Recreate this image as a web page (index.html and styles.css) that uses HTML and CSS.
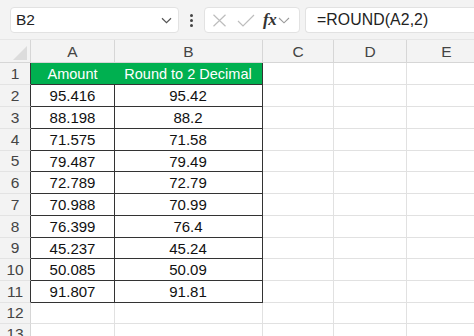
FILE: index.html
```html
<!DOCTYPE html>
<html>
<head>
<meta charset="utf-8">
<link rel="stylesheet" href="styles.css">
</head>
<body>
<div class="toolbar">
  <div class="namebox">
    <span class="nb-text">B2</span>
    <svg class="chev" width="11" height="7" viewBox="0 0 11 7"><path d="M1 1.2 L5.5 5.6 L10 1.2" fill="none" stroke="#555" stroke-width="1.2"/></svg>
  </div>
  <div class="dots"><span></span><span></span><span></span></div>
  <div class="fbtns">
    <svg width="15" height="13" viewBox="0 0 15 13"><path d="M1.5 0.8 L13.5 12.2 M13.5 0.8 L1.5 12.2" stroke="#bdbdbd" stroke-width="1.2" fill="none"/></svg>
    <svg width="18" height="13" viewBox="0 0 18 13"><path d="M1 7 L6 12 L17 1" stroke="#bdbdbd" stroke-width="1.2" fill="none"/></svg>
    <span class="fx">fx</span>
    <svg width="12" height="7" viewBox="0 0 12 7"><path d="M1 1 L6 5.8 L11 1" fill="none" stroke="#9a9a9a" stroke-width="1.1"/></svg>
  </div>
  <div class="formula">=ROUND(A2,2)</div>
</div>
<div class="sheet">
  <div class="corner"><div class="tri"></div></div>
  <div class="ch">A</div><div class="ch">B</div><div class="ch">C</div><div class="ch">D</div><div class="ch">E</div>

  <div class="rh tb">1</div><div class="c hd tl">Amount</div><div class="c hd tr">Round to 2 Decimal</div><div class="c"></div><div class="c"></div><div class="c"></div>
  <div class="rh tb">2</div><div class="c t tl">95.416</div><div class="c t tr">95.42</div><div class="c"></div><div class="c"></div><div class="c"></div>
  <div class="rh tb">3</div><div class="c t tl">88.198</div><div class="c t tr">88.2</div><div class="c"></div><div class="c"></div><div class="c"></div>
  <div class="rh tb">4</div><div class="c t tl">71.575</div><div class="c t tr">71.58</div><div class="c"></div><div class="c"></div><div class="c"></div>
  <div class="rh tb">5</div><div class="c t tl">79.487</div><div class="c t tr">79.49</div><div class="c"></div><div class="c"></div><div class="c"></div>
  <div class="rh tb">6</div><div class="c t tl">72.789</div><div class="c t tr">72.79</div><div class="c"></div><div class="c"></div><div class="c"></div>
  <div class="rh tb">7</div><div class="c t tl">70.988</div><div class="c t tr">70.99</div><div class="c"></div><div class="c"></div><div class="c"></div>
  <div class="rh tb">8</div><div class="c t tl">76.399</div><div class="c t tr">76.4</div><div class="c"></div><div class="c"></div><div class="c"></div>
  <div class="rh tb">9</div><div class="c t tl">45.237</div><div class="c t tr">45.24</div><div class="c"></div><div class="c"></div><div class="c"></div>
  <div class="rh tb">10</div><div class="c t tl">50.085</div><div class="c t tr">50.09</div><div class="c"></div><div class="c"></div><div class="c"></div>
  <div class="rh tb">11</div><div class="c t tl">91.807</div><div class="c t tr">91.81</div><div class="c"></div><div class="c"></div><div class="c"></div>
  <div class="rh">12</div><div class="c"></div><div class="c"></div><div class="c"></div><div class="c"></div><div class="c"></div>
  <div class="rh">13</div><div class="c"></div><div class="c"></div><div class="c"></div><div class="c"></div><div class="c"></div>
</div>
</body>
</html>
```

FILE: styles.css
```css
* { box-sizing: border-box; }
html, body { margin: 0; padding: 0; background: #fff; overflow: hidden; }
body { width: 474px; height: 336px; font-family: "Liberation Sans", Arial, sans-serif; }

.toolbar {
  height: 40px;
  background: #f3f3f3;
  display: flex;
  align-items: flex-start;
  padding: 7px 0 0 10px;
}
.namebox {
  width: 169px;
  height: 26px;
  background: #fff;
  border: 1px solid #e2e2e2;
  border-radius: 4px;
  display: flex;
  align-items: center;
  justify-content: space-between;
  padding: 0 6px 0 5px;
}
.nb-text { font-size: 15.5px; color: #222; }
.chev { margin-top: 1px; }
.dots {
  width: 25px;
  height: 26px;
  display: flex;
  flex-direction: column;
  align-items: center;
  justify-content: center;
  gap: 2px;
}
.dots span { width: 3px; height: 3px; border-radius: 50%; background: #444; }
.fbtns {
  width: 96px;
  height: 26px;
  background: #fff;
  border: 1px solid #e2e2e2;
  border-radius: 4px;
  display: flex;
  align-items: center;
  padding: 0 0 0 7px;
}
.fbtns svg:nth-child(1) { margin-right: 10px; }
.fbtns svg:nth-child(2) { margin-right: 8px; }
.fx {
  font-family: "Liberation Serif", "DejaVu Serif", serif;
  font-style: italic;
  font-weight: bold;
  font-size: 17px;
  color: #333;
  margin-right: 2px;
  letter-spacing: -0.5px;
}
.formula {
  margin-left: 5px;
  flex: 1;
  height: 26px;
  background: #fff;
  border: 1px solid #e2e2e2;
  border-right: none;
  border-radius: 4px 0 0 4px;
  font-size: 15.8px;
  color: #222;
  display: flex;
  align-items: center;
  padding-left: 11px;
  letter-spacing: 0.1px;
}

.sheet {
  display: grid;
  grid-template-columns: 31px 84px 148px 71px 73px 80px;
  grid-template-rows: 23px 22px 22px 22px 22px 21px 22px 22px 22px 21px 22px 22px 21px 21px;
  border-top: 1px solid #e6e6e6;
  margin-top: -1px;
}
.corner {
  background: #f3f3f3;
  border-right: 1px solid #d6d6d6;
  border-bottom: 1px solid #d6d6d6;
  position: relative;
}
.tri {
  position: absolute;
  right: 3px;
  bottom: 2px;
  width: 0;
  height: 0;
  border-left: 14px solid transparent;
  border-bottom: 14px solid #dcdcdc;
}
.ch {
  background: #f3f3f3;
  border-right: 1px solid #d6d6d6;
  border-bottom: 1px solid #d6d6d6;
  font-size: 15.5px;
  color: #444;
  display: flex;
  align-items: center;
  justify-content: center;
  padding-top: 2px;
}
.rh {
  background: #f3f3f3;
  border-right: 1px solid #d6d6d6;
  border-bottom: 1px solid #e3e3e3;
  font-size: 15.5px;
  color: #444;
  display: flex;
  align-items: center;
  justify-content: center;
}
.rh.tb { border-right-color: #333; }
.c {
  border-right: 1px solid #e1e1e1;
  border-bottom: 1px solid #e1e1e1;
  font-size: 15px;
  color: #111;
  display: flex;
  align-items: center;
  justify-content: center;
  white-space: nowrap;
}
.c.t, .c.hd { border-bottom-color: #333; }
.c.tl, .c.tr { border-right-color: #333; }
.c.tr { margin-left: -1px; }
.c.hd {
  background: #00b050;
  color: #fff;
  font-size: 14.5px;
}
```
